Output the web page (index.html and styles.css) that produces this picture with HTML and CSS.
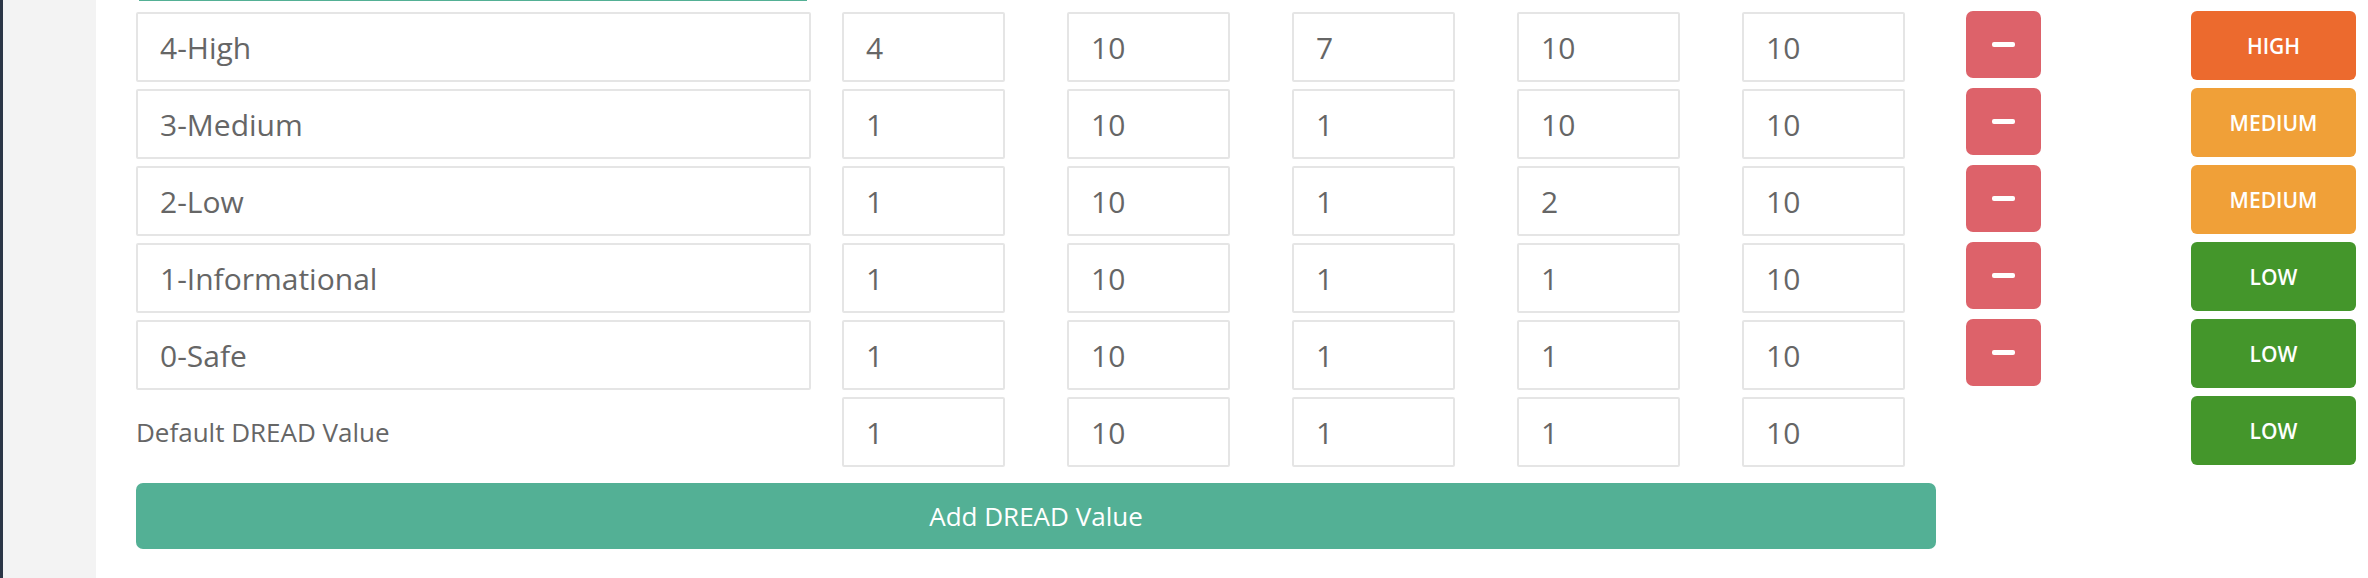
FILE: index.html
```html
<!DOCTYPE html>
<html>
<head>
<meta charset="utf-8">
<link rel="stylesheet" href="styles.css">
</head>
<body>
<div class="layout">
  <div class="rail"></div>
  <div class="sidebar"></div>
  <main class="content">
    <div class="prev-edge"></div>
    <div class="dread-grid">
      <input class="field name" value="4-High">
      <input class="field num" value="4">
      <input class="field num" value="10">
      <input class="field num" value="7">
      <input class="field num" value="10">
      <input class="field num" value="10">
      <button class="remove"><span class="minus"></span></button>
      <div class="badge high">HIGH</div>

      <input class="field name" value="3-Medium">
      <input class="field num" value="1">
      <input class="field num" value="10">
      <input class="field num" value="1">
      <input class="field num" value="10">
      <input class="field num" value="10">
      <button class="remove"><span class="minus"></span></button>
      <div class="badge medium">MEDIUM</div>

      <input class="field name" value="2-Low">
      <input class="field num" value="1">
      <input class="field num" value="10">
      <input class="field num" value="1">
      <input class="field num" value="2">
      <input class="field num" value="10">
      <button class="remove"><span class="minus"></span></button>
      <div class="badge medium">MEDIUM</div>

      <input class="field name" value="1-Informational">
      <input class="field num" value="1">
      <input class="field num" value="10">
      <input class="field num" value="1">
      <input class="field num" value="1">
      <input class="field num" value="10">
      <button class="remove"><span class="minus"></span></button>
      <div class="badge low">LOW</div>

      <input class="field name" value="0-Safe">
      <input class="field num" value="1">
      <input class="field num" value="10">
      <input class="field num" value="1">
      <input class="field num" value="1">
      <input class="field num" value="10">
      <button class="remove"><span class="minus"></span></button>
      <div class="badge low">LOW</div>

      <div class="default-label">Default DREAD Value</div>
      <input class="field num" value="1">
      <input class="field num" value="10">
      <input class="field num" value="1">
      <input class="field num" value="1">
      <input class="field num" value="10">
      <div class="empty"></div>
      <div class="badge low">LOW</div>

      <button class="add-btn">Add DREAD Value</button>
    </div>
  </main>
</div>
</body>
</html>
```
FILE: styles.css
```css
* { box-sizing: border-box; }
html, body {
  margin: 0;
  padding: 0;
  background: #fff;
  font-family: "Open Sans", "Noto Sans", sans-serif;
  color: #666;
}
.layout {
  display: flex;
  height: 578px;
  overflow: hidden;
}
.rail {
  width: 3px;
  background: #2b3646;
  flex: none;
}
.sidebar {
  width: 93px;
  background: #f3f3f3;
  flex: none;
}
.content {
  flex: 1;
  padding: 0 12px 0 40px;
  display: flex;
  flex-direction: column;
}
.prev-edge {
  height: 1px;
  width: 668px;
  margin-left: 3px;
  background: #53b095;
  flex: none;
}
.dread-grid {
  margin-top: 11px;
  display: grid;
  grid-template-columns: 706px 225px 225px 225px 225px 224px 225px 165px;
  grid-auto-rows: 70px;
  row-gap: 7px;
  align-items: start;
}
.field {
  height: 70px;
  border: 2px solid #e5e5e5;
  border-radius: 2px;
  background: #fff;
  font-family: "Open Sans", "Noto Sans", sans-serif;
  font-size: 30px;
  color: #666;
  padding: 0 22px;
  margin: 0;
  outline: none;
}
.field.name { width: 675px; }
.field.num { width: 163px; }
.remove {
  width: 75px;
  height: 67px;
  margin: -1px 0 0 0;
  padding: 0;
  border: none;
  border-radius: 7px;
  background: #dd626a;
  display: flex;
  align-items: center;
  justify-content: center;
}
.minus {
  display: block;
  width: 23px;
  height: 5px;
  border-radius: 2px;
  background: #fff;
}
.badge {
  width: 165px;
  height: 69px;
  margin-top: -1px;
  border-radius: 6px;
  color: #fff;
  font-weight: 600;
  font-size: 21px;
  display: flex;
  align-items: center;
  justify-content: center;
}
.badge.high { background: #ec6a2e; }
.badge.medium { background: #f0a038; }
.badge.low { background: #44962b; }
.default-label {
  height: 70px;
  display: flex;
  align-items: center;
  font-size: 26px;
  color: #666;
}
.empty { height: 70px; }
.add-btn {
  grid-column: 1 / 7;
  width: 1800px;
  height: 66px;
  margin-top: 9px;
  border: none;
  border-radius: 7px;
  background: #53b095;
  color: #fff;
  font-family: "Open Sans", "Noto Sans", sans-serif;
  font-size: 26px;
  padding: 0;
}
```
